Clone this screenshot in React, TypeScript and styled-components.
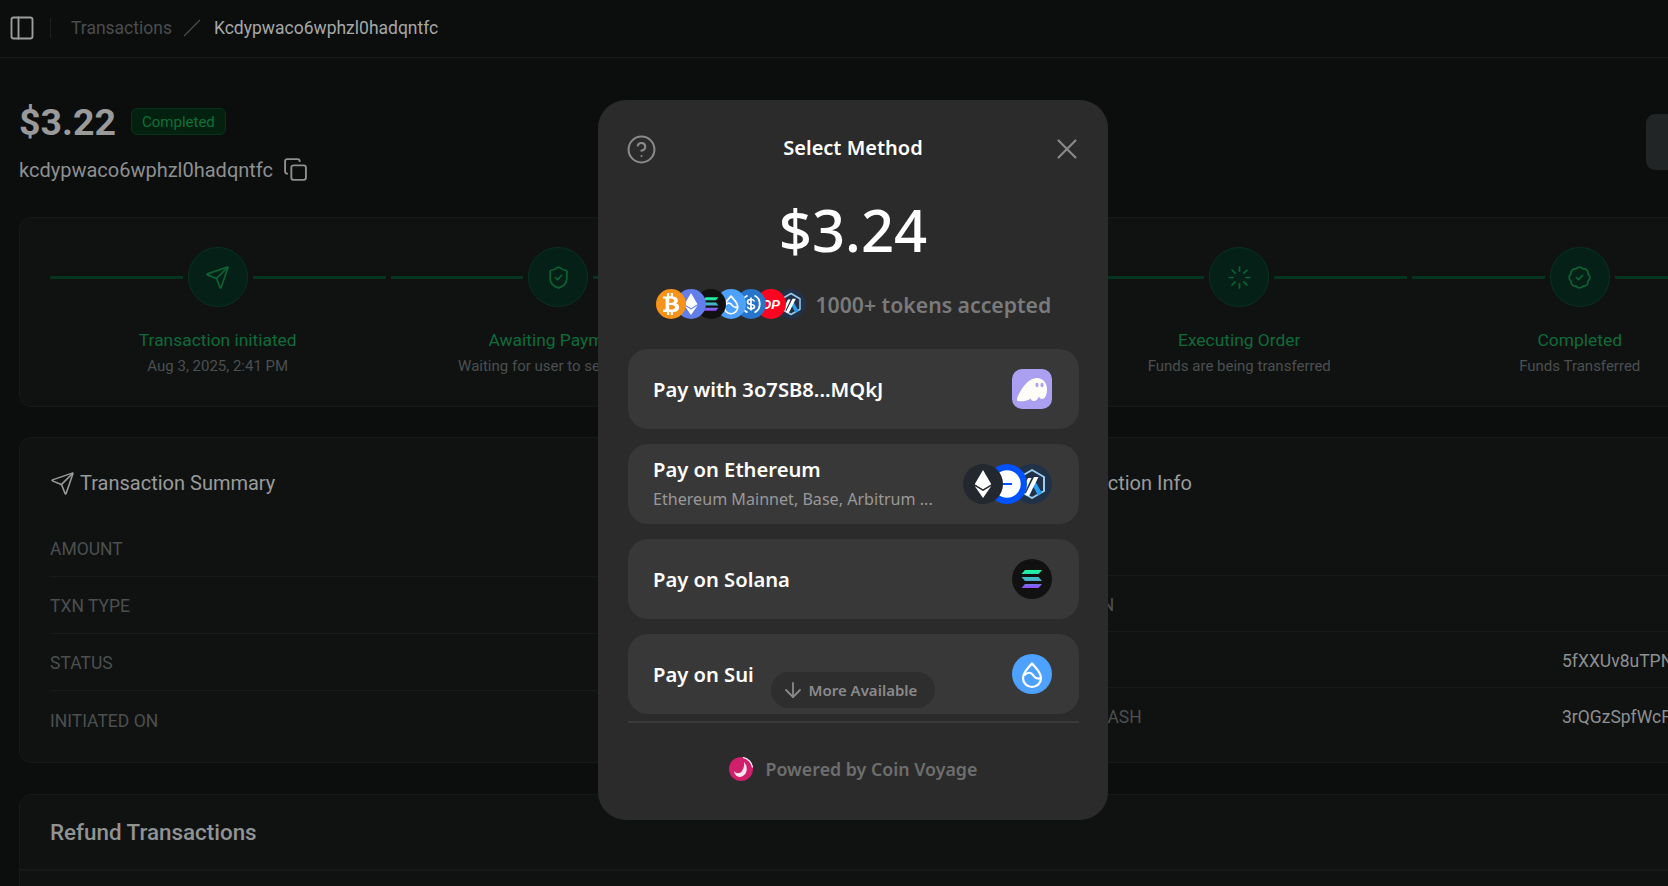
import {ReactNode} from 'react';
import styled, {createGlobalStyle} from 'styled-components';
import {ArrowDown, BadgeCheck, CircleHelp, Copy, Loader, PanelLeft, Send, ShieldCheck, Wallet, X} from 'lucide-react';
import {FaBtc, FaEthereum} from 'react-icons/fa';

const GlobalStyle = createGlobalStyle`
	html, body {
		margin: 0;
		height: 100%;
		overflow: hidden;
		background: #0c0e0e;
	}
	* {
		box-sizing: border-box;
	}
`;

/* logos */

const SolanaMark = ({size}: {size: number}) => (
	<svg width={size} height={size} viewBox="0 0 40 40">
		<defs>
			<linearGradient id="solGrad" x1="0" y1="0" x2="0" y2="1">
				<stop offset="0" stopColor="#19fb9b" />
				<stop offset="0.5" stopColor="#3fb8c8" />
				<stop offset="1" stopColor="#9945ff" />
			</linearGradient>
		</defs>
		<path d="M13 11h17l-3.500 4H9.500zM9.500 18h17l3.500 4H13zM13 25h17l-3.500 4H9.500z" fill="url(#solGrad)" />
	</svg>
);

const SuiMark = ({size}: {size: number}) => (
	<svg width={size} height={size} viewBox="0 0 40 40" fill="none">
		<path
			d="M20 9.500c3.500 4.500 9 8.500 9 14.500a9 9 0 0 1-18 0c0-6 5.500-10 9-14.500z"
			stroke="#fff"
			strokeWidth="2.200"
			strokeLinejoin="round"
		/>
		<path d="M12 21.500c3-3.500 6.500-3.500 8.500-1 2 3 5 5 8 3.500" stroke="#fff" strokeWidth="2.200" />
	</svg>
);

const UsdcMark = ({size}: {size: number}) => (
	<svg width={size} height={size} viewBox="0 0 30 30" fill="none">
		<path d="M11.500 6.500a9.500 9.500 0 0 0 0 17" stroke="#fff" strokeWidth="1.800" />
		<path d="M18.500 6.500a9.500 9.500 0 0 1 0 17" stroke="#fff" strokeWidth="1.800" />
		<path
			d="M18.500 12.500c-.5-1.500-2-2-3.500-2-2 0-3.500 1-3.500 2.400 0 3.600 7 1.600 7 4.600 0 1.400-1.500 2.300-3.500 2.300-1.700 0-3.200-.7-3.600-2.200M15 8.500v13"
			stroke="#fff"
			strokeWidth="1.700"
		/>
	</svg>
);

const ArbitrumMark = ({size}: {size: number}) => (
	<svg width={size} height={size} viewBox="0 0 40 40" fill="none">
		<path d="M20 6l12 7v14l-12 7-12-7V13z" stroke="#9dcced" strokeWidth="2" strokeLinejoin="round" />
		<path d="M22 15l8 14-4 2.500-6.500-12z" fill="#28a0f0" />
		<path d="M13 31l9-18h4.500l-9.500 19z" fill="#fff" />
		<path d="M9 28l7-14h3.500L12 30z" fill="#fff" />
	</svg>
);

const BaseMark = ({size}: {size: number}) => (
	<svg width={size} height={size} viewBox="0 0 40 40">
		<circle cx="20" cy="20" r="13.700" fill="#fff" />
		<rect x="5" y="19" width="20" height="2" fill="#0052ff" />
	</svg>
);

const PhantomMark = () => (
	<svg width="40" height="40" viewBox="0 0 40 40">
		<path
			d="M6 32C5 32 4.500 30 6 27 10 18 17 9 25 9c6 0 10 5 10 11 0 6-2 10-5 10-2 0-2.500-1.500-3-2.500-1 2.500-3 4.500-5 4.500-2 0-3-1.500-3.500-2.500C17 31 12 33 6 32z"
			fill="#fffdf8"
		/>
		<ellipse cx="25" cy="16" rx="1.500" ry="2.300" fill="#ab9ff2" />
		<ellipse cx="30" cy="16" rx="1.500" ry="2.300" fill="#ab9ff2" />
	</svg>
);

const VoyageLogo = () => (
	<svg width="24" height="24" viewBox="0 0 24 24" fill="none">
		<circle cx="12" cy="12" r="12" fill="#d01f6b" />
		<path d="M14 .5c5 1 9 5 9.500 10" stroke="#fff" strokeWidth="1.200" />
		<path d="M15 5c4 4 4 12-2 14.500-4 1.500-7.500-1.500-8-5.500 2 3 6 3 8 0 2-3 2.500-6 2-9z" fill="#f8e6ee" />
	</svg>
);

/* page */

const Page = styled.div`
	width: 1801px;
	font-family: Roboto, 'Liberation Sans', sans-serif;
	background: #0c0e0e;
	min-height: 886px;
`;

const TopBar = styled.header`
	height: 58px;
	display: flex;
	align-items: center;
	padding: 0 0 2px 8px;
	border-bottom: 1px solid #181b1b;
	font-size: 17.500px;
`;

const SideToggle = styled.span`
	display: flex;
	color: #9c9e9e;
`;

const BarDivider = styled.span`
	width: 1px;
	height: 20px;
	margin: 0 20px 0 14px;
	background: #1b1e1e;
`;

const Crumb = styled.span<{$current?: boolean}>`
	color: ${(p) => (p.$current ? '#a6a8a8' : '#494d4d')};
`;

const CrumbSlash = styled.svg`
	margin: 0 14px 0 12px;
`;

const Main = styled.main`
	padding: 50px 19px 0;
`;

const TitleRow = styled.section`
	display: flex;
	justify-content: space-between;
	height: 109px;
`;

const AmountLine = styled.div`
	display: flex;
	align-items: center;
	gap: 15px;
	height: 27px;
	margin-bottom: 22px;
`;

const PageAmount = styled.h1`
	margin: 0;
	font-size: 37.500px;
	font-weight: 700;
	color: #9a9a9a;
`;

const StatusBadge = styled.span`
	height: 27px;
	width: 95px;
	display: flex;
	align-items: center;
	justify-content: center;
	font-size: 15px;
	color: #0f6f3a;
	background: #04200f;
	border: 1px solid #07341b;
	border-radius: 6px;
`;

const IdLine = styled.div`
	display: flex;
	align-items: center;
	gap: 10px;
	font-size: 20px;
	color: #8d9090;
`;

const CopyIcon = styled(Copy)`
	color: #8d9090;
`;

const ActionButton = styled.div`
	width: 136px;
	height: 56px;
	margin-top: 6px;
	border-radius: 9px;
	background: #212526;
`;

const Card = styled.section`
	background: #101212;
	border: 1px solid #161919;
	border-radius: 12px;
`;

const StepperCard = styled(Card)`
	display: flex;
	gap: 5px;
	height: 190px;
	padding: 29px 30px 0;
`;

const StepItem = styled.div`
	width: 335.500px;
	display: flex;
	flex-direction: column;
	align-items: center;
`;

const StepTrack = styled.div`
	width: 100%;
	display: flex;
	align-items: center;
	gap: 5px;
`;

const StepLine = styled.span`
	flex: 1;
	height: 3px;
	background: #053420;
`;

const StepCircle = styled.span`
	width: 60px;
	height: 60px;
	display: flex;
	align-items: center;
	justify-content: center;
	color: #0c6235;
	background: #052016;
	border: 1px solid #07331f;
	border-radius: 50%;
`;

const StepTitle = styled.div`
	margin-top: 22px;
	font-size: 17.400px;
	line-height: 22px;
	color: #0e6b3a;
`;

const StepNote = styled.div`
	margin-top: 5px;
	font-size: 15px;
	line-height: 20px;
	color: #4b4f4f;
`;

const InfoGrid = styled.div`
	display: grid;
	grid-template-columns: 935px 796px;
	gap: 32px;
	margin-top: 30px;
`;

const InfoCard = styled(Card)`
	height: 326px;
	padding: 31px 30px 0;
`;

const InfoTitle = styled.h2`
	display: flex;
	align-items: center;
	gap: 5px;
	height: 28px;
	margin: 0 0 23px;
	font-size: 20px;
	font-weight: 400;
	color: #999b9b;
`;

const InfoRow = styled.div<{$height: number; $last?: boolean}>`
	display: grid;
	grid-template-columns: 545px 1fr;
	align-items: center;
	height: ${(p) => p.$height}px;
	padding-top: 2px;
	font-size: 17.500px;
	border-bottom: ${(p) => (p.$last ? 'none' : '1px solid #171a1a')};
`;

const InfoLabel = styled.span`
	color: #4b4f4f;
	white-space: nowrap;
`;

const InfoValue = styled.span`
	color: #8d9090;
	white-space: nowrap;
	overflow: hidden;
`;

const RefundCard = styled(Card)`
	margin-top: 31px;
	height: 160px;
`;

const RefundHead = styled.h2`
	display: flex;
	align-items: center;
	height: 76px;
	margin: 0;
	padding-left: 30px;
	font-size: 22.400px;
	font-weight: 500;
	color: #919393;
	border-bottom: 2px solid #171a1a;
`;

/* modal */

const Modal = styled.aside`
	position: fixed;
	left: 598px;
	top: 100px;
	width: 510px;
	height: 720px;
	padding: 35px 29.500px 0;
	font-family: 'Noto Sans', 'Open Sans', sans-serif;
	background: #2b2b2b;
	border-radius: 28px;
`;

const ModalHead = styled.div`
	position: relative;
	display: flex;
	align-items: center;
	justify-content: space-between;
	height: 28px;
	color: #8a8a8a;
`;

const ModalTitle = styled.div`
	position: absolute;
	left: 0;
	right: 0;
	top: -1px;
	text-align: center;
	font-size: 20px;
	font-weight: 600;
	color: #fff;
`;

const HelpIcon = styled(CircleHelp)`
	margin-left: -2px;
`;

const CloseIcon = styled(X)`
	margin-right: -5px;
`;

const ModalAmount = styled.div`
	margin-top: 32px;
	height: 70px;
	line-height: 70px;
	text-align: center;
	font-size: 58px;
	font-weight: 500;
	color: #fff;
`;

const TokensRow = styled.div`
	display: flex;
	align-items: center;
	height: 30px;
	margin: 24px 0 30px 28px;
`;

const TokensNote = styled.span`
	margin-left: 10px;
	font-size: 21.200px;
	font-weight: 600;
	white-space: nowrap;
	color: #7a7a7a;
`;

const CoinStack = styled.div`
	display: flex;
	flex: none;
`;

const Coin = styled.span<{$size: number; $bg: string; $step: number; $z: number}>`
	position: relative;
	z-index: ${(p) => p.$z};
	width: ${(p) => p.$size}px;
	height: ${(p) => p.$size}px;
	display: flex;
	align-items: center;
	justify-content: center;
	flex: none;
	overflow: hidden;
	color: #fff;
	background: ${(p) => p.$bg};
	border-radius: 50%;
	&:not(:first-child) {
		margin-left: ${(p) => p.$step - p.$size}px;
	}
`;

const OpText = styled.span`
	font-family: 'Liberation Sans', sans-serif;
	font-size: 13px;
	font-weight: 700;
	font-style: italic;
	color: #fff;
`;

const PhantomTile = styled.span`
	display: flex;
	width: 40px;
	height: 40px;
	background: #ab9ff2;
	border-radius: 10px;
`;

const MethodList = styled.div`
	position: relative;
	display: flex;
	flex-direction: column;
	gap: 15px;
`;

const Method = styled.div`
	height: 80px;
	display: flex;
	align-items: center;
	justify-content: space-between;
	padding: 0 27px 0 25.500px;
	background: #383838;
	border-radius: 20px;
`;

const MethodText = styled.div`
	display: flex;
	flex-direction: column;
	padding-bottom: 2px;
`;

const MethodName = styled.span`
	font-size: 20.200px;
	font-weight: 600;
	line-height: 28px;
	white-space: nowrap;
	color: #fff;
`;

const MethodNote = styled.span`
	margin-top: 4px;
	font-size: 16.100px;
	line-height: 24px;
	white-space: nowrap;
	color: #999;
`;

const MorePill = styled.div`
	position: absolute;
	left: 143px;
	bottom: 6px;
	width: 164px;
	height: 36px;
	display: flex;
	align-items: center;
	gap: 4px;
	padding-left: 10px;
	font-size: 15px;
	font-weight: 600;
	color: #8a8a8a;
	background: #2e2e2e;
	border-radius: 18px;
`;

const ModalDivider = styled.hr`
	height: 2px;
	margin: 7px 0 0;
	border: 0;
	background: #3a3a3a;
`;

const PoweredBy = styled.div`
	display: flex;
	align-items: center;
	justify-content: center;
	gap: 13px;
	margin-top: 34px;
	font-size: 17.800px;
	font-weight: 600;
	color: #6e6e6e;
`;

const steps: {title: string; note: string; icon: ReactNode}[] = [
	{title: 'Transaction initiated', note: 'Aug 3, 2025, 2:41 PM', icon: <Send size={25} strokeWidth={1.6} />},
	{title: 'Awaiting Payment', note: 'Waiting for user to send funds', icon: <ShieldCheck size={25} strokeWidth={1.6} />},
	{title: 'Payment Received', note: 'Funds have been received', icon: <Wallet size={25} strokeWidth={1.6} />},
	{title: 'Executing Order', note: 'Funds are being transferred', icon: <Loader size={25} strokeWidth={1.6} />},
	{title: 'Completed', note: 'Funds Transferred', icon: <BadgeCheck size={25} strokeWidth={1.6} />},
];

const summaryRows = [
	{label: 'AMOUNT', value: ''},
	{label: 'TXN TYPE', value: ''},
	{label: 'STATUS', value: ''},
	{label: 'INITIATED ON', value: ''},
];

const infoRows = [
	{label: 'RECEIVER', value: ''},
	{label: 'PAID TOKEN', value: ''},
	{label: 'TXN ID', value: '5fXXUv8uTPNq2hYd7'},
	{label: 'SWAP TX HASH', value: '3rQGzSpfWcFk8mNa4'},
];

const App = () => {
	return (
		<Page>
			<GlobalStyle />
			<TopBar>
				<SideToggle>
					<PanelLeft size={28} strokeWidth={1.6} />
				</SideToggle>
				<BarDivider />
				<Crumb>Transactions</Crumb>
				<CrumbSlash width="16" height="18" viewBox="0 0 16 18">
					<path d="M0 17L16 1" stroke="#4d5151" strokeWidth="1.200" />
				</CrumbSlash>
				<Crumb $current>Kcdypwaco6wphzl0hadqntfc</Crumb>
			</TopBar>

			<Main>
				<TitleRow>
					<div>
						<AmountLine>
							<PageAmount>$3.22</PageAmount>
							<StatusBadge>Completed</StatusBadge>
						</AmountLine>
						<IdLine>
							kcdypwaco6wphzl0hadqntfc
							<CopyIcon size={25} strokeWidth={1.8} />
						</IdLine>
					</div>
					<ActionButton />
				</TitleRow>

				<StepperCard>
					{steps.map((step) => (
						<StepItem key={step.title}>
							<StepTrack>
								<StepLine />
								<StepCircle>{step.icon}</StepCircle>
								<StepLine />
							</StepTrack>
							<StepTitle>{step.title}</StepTitle>
							<StepNote>{step.note}</StepNote>
						</StepItem>
					))}
				</StepperCard>

				<InfoGrid>
					<InfoCard>
						<InfoTitle>
							<Send size={25} strokeWidth={1.5} />
							Transaction Summary
						</InfoTitle>
						{summaryRows.map((row, index) => (
							<InfoRow key={row.label} $height={57} $last={index === summaryRows.length - 1}>
								<InfoLabel>{row.label}</InfoLabel>
								<InfoValue>{row.value}</InfoValue>
							</InfoRow>
						))}
					</InfoCard>
					<InfoCard>
						<InfoTitle>
							<Wallet size={25} strokeWidth={1.5} />
							Transaction Info
						</InfoTitle>
						{infoRows.map((row, index) => (
							<InfoRow key={row.label} $height={56} $last={index === infoRows.length - 1}>
								<InfoLabel>{row.label}</InfoLabel>
								<InfoValue>{row.value}</InfoValue>
							</InfoRow>
						))}
					</InfoCard>
				</InfoGrid>

				<RefundCard>
					<RefundHead>Refund Transactions</RefundHead>
				</RefundCard>
			</Main>

			<Modal>
				<ModalHead>
					<ModalTitle>Select Method</ModalTitle>
					<HelpIcon size={31} strokeWidth={1.6} />
					<CloseIcon size={34} strokeWidth={1.5} />
				</ModalHead>

				<ModalAmount>$3.24</ModalAmount>

				<TokensRow>
					<CoinStack>
						<Coin $size={30} $step={20} $z={7} $bg="#f7931a">
							<FaBtc size={22} />
						</Coin>
						<Coin $size={30} $step={20} $z={6} $bg="#627eea">
							<FaEthereum size={22} />
						</Coin>
						<Coin $size={30} $step={20} $z={5} $bg="#111">
							<SolanaMark size={30} />
						</Coin>
						<Coin $size={30} $step={20} $z={4} $bg="#4da2ff">
							<SuiMark size={30} />
						</Coin>
						<Coin $size={30} $step={20} $z={3} $bg="#2775ca">
							<UsdcMark size={30} />
						</Coin>
						<Coin $size={30} $step={20} $z={2} $bg="#ff0420">
							<OpText>OP</OpText>
						</Coin>
						<Coin $size={30} $step={20} $z={1} $bg="#213147">
							<ArbitrumMark size={30} />
						</Coin>
					</CoinStack>
					<TokensNote>1000+ tokens accepted</TokensNote>
				</TokensRow>

				<MethodList>
					<Method>
						<MethodName>Pay with 3o7SB8...MQkJ</MethodName>
						<PhantomTile>
							<PhantomMark />
						</PhantomTile>
					</Method>
					<Method>
						<MethodText>
							<MethodName>Pay on Ethereum</MethodName>
							<MethodNote>Ethereum Mainnet, Base, Arbitrum ...</MethodNote>
						</MethodText>
						<CoinStack>
							<Coin $size={40} $step={24.5} $z={3} $bg="#23282e">
								<FaEthereum size={28} />
							</Coin>
							<Coin $size={40} $step={24.5} $z={2} $bg="#0052ff">
								<BaseMark size={40} />
							</Coin>
							<Coin $size={40} $step={24.5} $z={1} $bg="#213147">
								<ArbitrumMark size={40} />
							</Coin>
						</CoinStack>
					</Method>
					<Method>
						<MethodName>Pay on Solana</MethodName>
						<Coin $size={40} $step={40} $z={1} $bg="#111">
							<SolanaMark size={40} />
						</Coin>
					</Method>
					<Method>
						<MethodName>Pay on Sui</MethodName>
						<Coin $size={40} $step={40} $z={1} $bg="#4da2ff">
							<SuiMark size={40} />
						</Coin>
					</Method>
					<MorePill>
						<ArrowDown size={24} strokeWidth={1.8} />
						More Available
					</MorePill>
				</MethodList>

				<ModalDivider />

				<PoweredBy>
					<VoyageLogo />
					Powered by Coin Voyage
				</PoweredBy>
			</Modal>
		</Page>
	);
};

export default App;
